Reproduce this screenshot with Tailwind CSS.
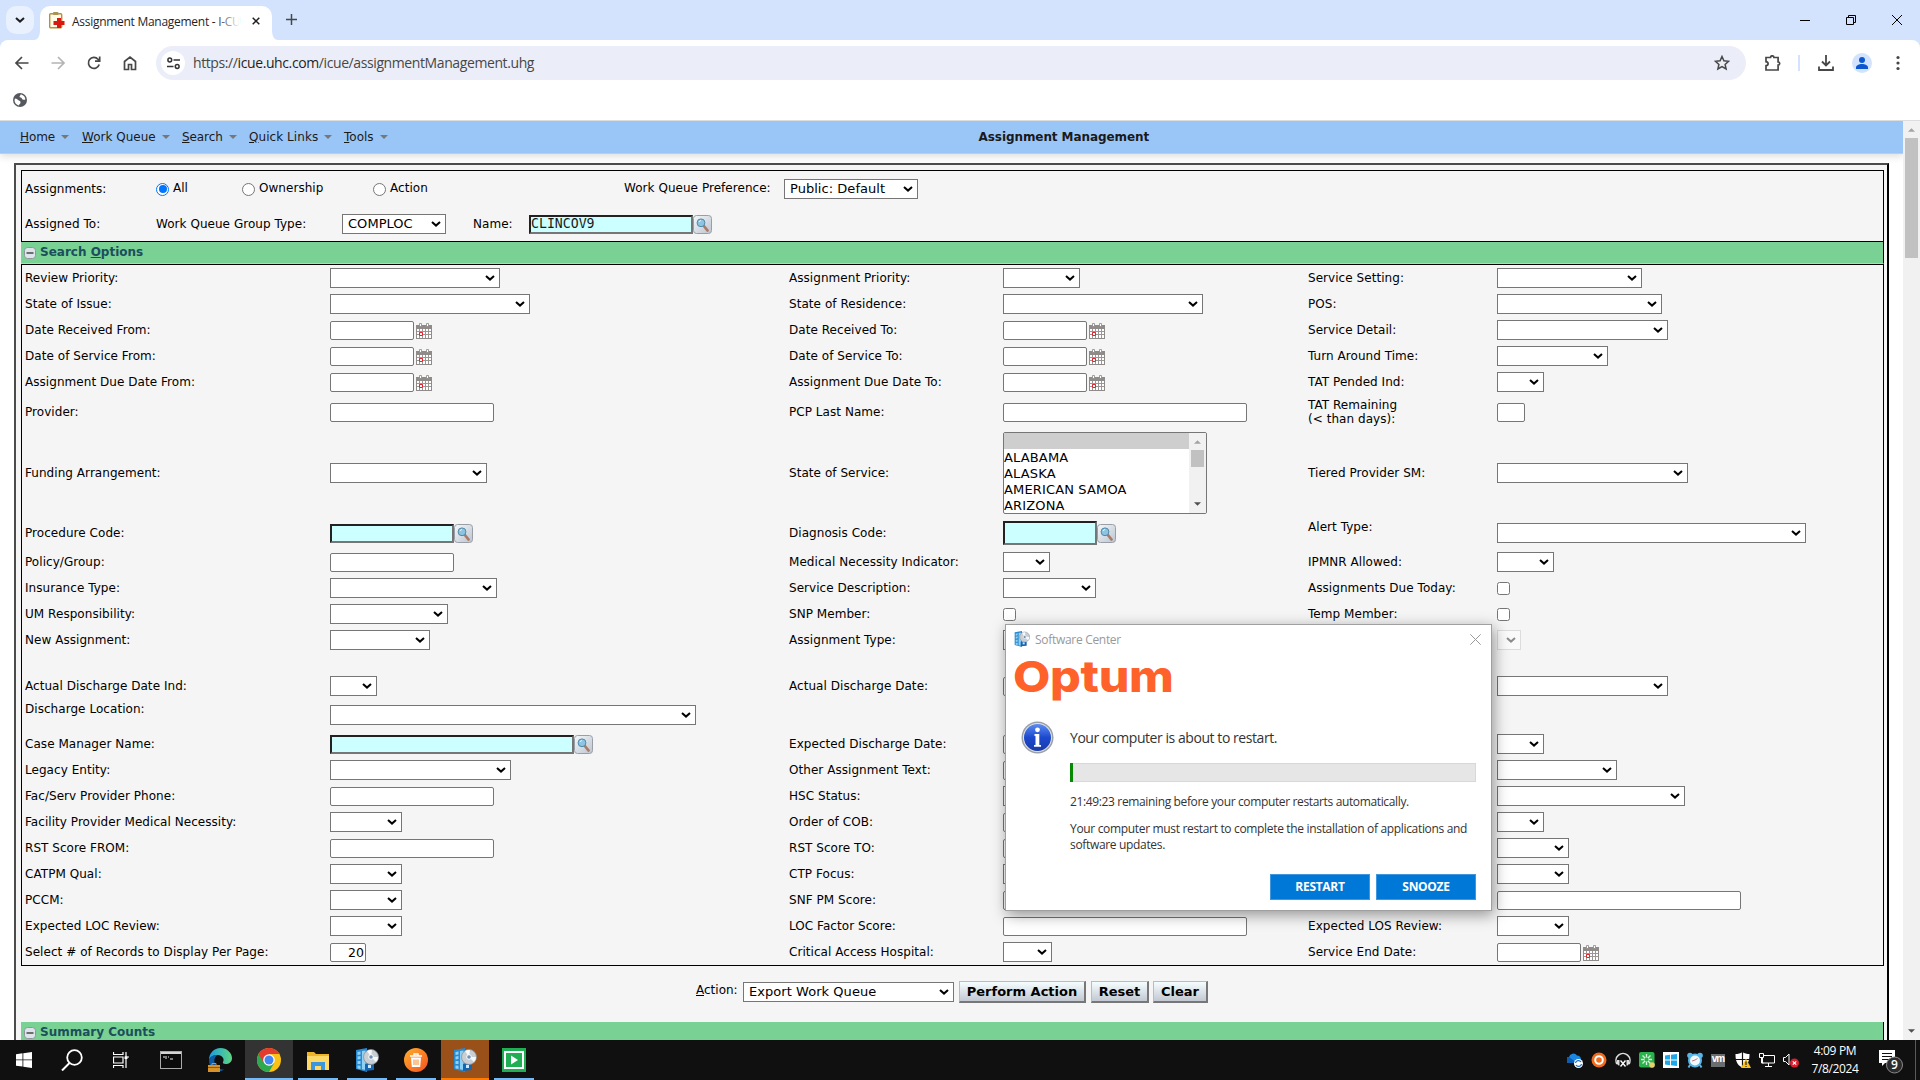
<!DOCTYPE html>
<html lang="en">
<head>
<meta charset="utf-8">
<title>Assignment Management - I-CUE</title>
<script src="https://cdn.jsdelivr.net/npm/@tailwindcss/browser@4"></script>
</head>
<body class="relative h-[1080px] w-[1920px] overflow-hidden bg-white font-['DejaVu_Sans',sans-serif] text-xs leading-[14px] text-black">

<svg class="absolute size-0" aria-hidden="true">
  <defs>
    <linearGradient id="gBtn" x1="0" y1="0" x2="1" y2="1"><stop offset="0" stop-color="#f4f8fa"/><stop offset="1" stop-color="#bcc4d0"/></linearGradient>
    <linearGradient id="gInfo" x1="0" y1="0" x2="0" y2="1"><stop offset="0" stop-color="#5d8df0"/><stop offset=".5" stop-color="#1d49cf"/><stop offset="1" stop-color="#1a3aa8"/></linearGradient>
    <linearGradient id="gEdge" x1="0" y1="0" x2="1" y2="0"><stop offset="0" stop-color="#1b9de2"/><stop offset="1" stop-color="#5fd67f"/></linearGradient>
    <linearGradient id="gTrash" x1="0" y1="0" x2="1" y2="1"><stop offset="0" stop-color="#ffb02e"/><stop offset="1" stop-color="#f4511e"/></linearGradient>
  </defs>
  <symbol id="chev" viewBox="0 0 10 6"><path d="M1 1l4 3.6L9 1" fill="none" stroke="currentColor" stroke-width="2"/></symbol>
  <symbol id="find" viewBox="0 0 19 19"><rect x=".5" y=".5" width="18" height="18" rx="3" fill="url(#gBtn)" stroke="#9a9ea6"/><path d="M10.500 10.500l4 5" stroke="#a87c66" stroke-width="2.800" stroke-linecap="round"/><circle cx="8" cy="7.800" r="3.900" fill="#8cc4e2" stroke="#4f88a8"/><path d="M6 7a2.500 2.500 0 0 1 2-1.500" stroke="#e8f7ff" fill="none"/></symbol>
  <symbol id="cal" viewBox="0 0 16 16"><rect x="0" y="2" width="16" height="14" fill="#8f8b89"/><path d="M1 6h14v9H1z" fill="#fff"/><path d="M3.500 6v9M6.500 6v9M9.500 6v9M12.500 6v9M1 8.500h14M1 11.500h14" stroke="#9b9795"/><path d="M3.500 9.500h3v3h-3z" fill="#fff" stroke="#e8232c"/><path d="M3.500 .5h2v3h-2zM10.500 .5h2v3h-2z" fill="#fff" stroke="#8a8684" stroke-width=".8"/></symbol>
  <symbol id="disc" viewBox="0 0 24 24"><path d="M1 2l11-2v24L1 21z" fill="#2a8ad0"/><path d="M2.500 4l3-.5v3l-3 .5zM2.500 8.500l3-.5v3l-3 .5zM2.500 13h3v3h-3zM2.500 17.500l3 .3V21l-3-.5zM7 3l3.500-.6V22L7 21.300z" fill="#8fd0f5"/><path d="M10 16h9v6l-9 1z" fill="#1565b0"/><path d="M13 17h3v3h-3z" fill="#cfe8fa"/><circle cx="16" cy="9" r="7.500" fill="#c9ced3" stroke="#8b9299" stroke-width=".8"/><path d="M16 9l-4-6a7 7 0 0 1 5-1zM16 9l5 5a7 7 0 0 0 2-5z" fill="#f7fafc"/><circle cx="16" cy="9" r="2.300" fill="#6c93b5" stroke="#fff"/></symbol>
  <symbol id="minus" viewBox="0 0 12 12"><rect x=".5" y=".5" width="11" height="11" rx="3" fill="#dde4ea" stroke="#8f979c"/><path d="M2.500 6h7" stroke="#222" stroke-width="1.200"/></symbol>
  <symbol id="tri" viewBox="0 0 8 4"><path d="M0 0h8L4 4z" fill="currentColor"/></symbol>
</svg>

<!-- Browser: tab strip -->
<header>
  <div class="flex h-10 items-end bg-[#d3e3fd] font-['Open_Sans',sans-serif]">
    <div class="mb-1.5 ml-1.5 flex size-7 items-center justify-center rounded-[10px] bg-[#e9f0fe]"><svg class="h-1.5 w-2.5 text-[#1f1f1f]"><use href="#chev"/></svg></div>
    <svg class="h-10 w-1.5"><path d="M6 30v10H0c4 0 6-4 6-10z" fill="#fff"/></svg>
    <div class="flex h-[34px] w-[232px] items-center rounded-t-[10px] bg-white pl-[9px]">
      <svg class="mt-[-5px] h-[17px] w-4" viewBox="0 0 16 17"><rect x=".7" y="1.700" width="12" height="14" rx="1" fill="#fffbe6" stroke="#b8903a" stroke-width="1.400"/><rect x="4" y="0" width="5.500" height="3" rx="1" fill="#a99255"/><path d="M8 6h4v3h3.500v4H12v3H8v-3H4.500V9H8z" fill="#d8190f"/></svg>
      <span class="relative mb-0.5 ml-[7px] w-[168px] whitespace-nowrap text-xs leading-5 tracking-[-0.28px] text-[#1f1f1f]">Assignment Management - I-CU<i class="absolute inset-y-0 right-0 w-6 bg-linear-to-r from-transparent to-white"></i></span>
      <svg class="mb-1 ml-3 size-2" viewBox="0 0 8 8"><path d="M.7.7l6.600 6.600M7.300.7L.7 7.300" stroke="#1f1f1f" stroke-width="1.500"/></svg>
    </div>
    <svg class="h-10 w-1.5"><path d="M0 30v10h6c-4 0-6-4-6-10z" fill="#fff"/></svg>
    <svg class="mb-[15px] ml-2 size-[11px]" viewBox="0 0 11 11"><path d="M5.500 0v11M0 5.500h11" stroke="#474747" stroke-width="1.500"/></svg>
    <div class="ml-auto flex self-center">
      <span class="flex w-[46px] justify-center"><svg class="size-2.5" viewBox="0 0 10 10"><path d="M0 5.500h10" stroke="#000"/></svg></span>
      <span class="flex w-[46px] justify-center"><svg class="size-2.5" viewBox="0 0 10 10"><path d="M.5 2.500h7v7h-7zM2.500 2.500v-2h7v7h-2" fill="none" stroke="#000"/></svg></span>
      <span class="flex w-[46px] justify-center"><svg class="size-2.5" viewBox="0 0 10 10"><path d="M0 0l10 10M10 0L0 10" stroke="#000"/></svg></span>
    </div>
  </div>
  <!-- Toolbar -->
  <div class="bg-[#d3e3fd]">
  <div class="flex h-[46px] items-center rounded-t-lg bg-white pl-1">
    <span class="flex w-9 justify-center"><svg class="size-4" viewBox="0 0 16 16"><path d="M14.500 8H2M8 2L2 8l6 6" fill="none" stroke="#474747" stroke-width="1.700"/></svg></span>
    <span class="flex w-9 justify-center"><svg class="size-4" viewBox="0 0 16 16"><path d="M1.500 8H14M8 2l6 6-6 6" fill="none" stroke="#b4b4b4" stroke-width="1.700"/></svg></span>
    <span class="flex w-9 justify-center"><svg class="size-4" viewBox="0 0 16 16"><path d="M13.200 9.500A5.500 5.500 0 1 1 12 4.200l1.500 1.600M13.700 1.500v4.600H9" fill="none" stroke="#474747" stroke-width="1.700"/></svg></span>
    <span class="flex w-9 justify-center"><svg class="size-4" viewBox="0 0 16 16"><path d="M2.500 6.500L8 2l5.500 4.500v8h-4v-5h-3v5h-4z" fill="none" stroke="#474747" stroke-width="1.700"/></svg></span>
    <div class="ml-2 flex h-[34px] w-[1590px] items-center rounded-full bg-[#ebeef8] pl-[5px]">
      <span class="flex size-6 items-center justify-center rounded-full bg-white"><svg class="size-[13px]" viewBox="0 0 13 13"><path d="M6.500 3H13M0 9.500h6.500" stroke="#333" stroke-width="1.600"/><circle cx="2.800" cy="3" r="1.900" fill="none" stroke="#333" stroke-width="1.500"/><circle cx="10.200" cy="9.500" r="1.900" fill="none" stroke="#333" stroke-width="1.500"/></svg></span>
      <span class="ml-2 font-['Open_Sans',sans-serif] text-sm tracking-[-0.4px] text-[#474747]">https://<span class="text-[#1f1f1f]">icue.uhc.com</span>/icue/assignmentManagement.uhg</span>
      <svg class="mr-4 ml-auto size-4" viewBox="0 0 16 16"><path d="M8 1.500l1.900 4.300 4.700.5-3.500 3.100 1 4.600L8 11.600 3.900 14l1-4.600L1.400 6.300l4.700-.5z" fill="none" stroke="#474747" stroke-width="1.500"/></svg>
    </div>
    <svg class="ml-[19px] size-4" viewBox="0 0 16 16"><path d="M1 2.500h4.500a1.700 1.700 0 0 1 3.400 0h4.200V7a1.600 1.600 0 0 1 0 3.200v4.800H1v-4.300c2.800-.4 2.800-3.600 0-4z" fill="none" stroke="#474747" stroke-width="1.700"/></svg>
    <i class="ml-[17px] h-4 w-0.5 bg-[#d3e3fd]"></i>
    <svg class="ml-[18px] size-4" viewBox="0 0 16 16"><path d="M8 0v10.500M4 6.500l4 4 4-4M1 11.500V15h14v-3.500" fill="none" stroke="#474747" stroke-width="1.800"/></svg>
    <svg class="ml-[18px] size-5" viewBox="0 0 20 20"><circle cx="10" cy="10" r="10" fill="#d3e3fd"/><circle cx="10" cy="7" r="3" fill="#0b57d0"/><path d="M4 16v-1.500c0-2 3-3.500 6-3.500s6 1.500 6 3.500V16z" fill="#0b57d0"/></svg>
    <svg class="ml-6 h-4 w-1" viewBox="0 0 4 16"><circle cx="2" cy="2.500" r="1.600" fill="#474747"/><circle cx="2" cy="8" r="1.600" fill="#474747"/><circle cx="2" cy="13.500" r="1.600" fill="#474747"/></svg>
  </div>
  </div>
  <div class="flex h-[35px] items-center border-b border-[#dadce0] bg-white pl-[13px]">
    <svg class="mb-1.5 size-3.5" viewBox="0 0 14 14"><circle cx="7" cy="7" r="7" fill="#55595e"/><path d="M2 5.500c1.500 0 2.500 1 3.500 1.800S7.500 8 7.500 9.500 6 11 6 12.500C3.500 12 1.500 10 1.500 7zM7.500 1.500c0 1-1 1.500-1 2.300S9 4.500 9 5.800s2 .7 3.300.9C12.500 4 10 1.500 7.500 1.500z" fill="#fff"/></svg>
  </div>
</header>

<div class="flex h-[919px]">
<main class="h-[919px] w-[1903px] overflow-hidden">
  <!-- Application menu -->
  <nav class="relative flex h-[33px] items-center border-b border-[#c9ccd1] bg-[#9ac6f7] pl-5 text-[#1a1a1a] shadow-[0_2px_8px_rgba(0,0,0,0.15)]">
    <span class="flex w-[62px] items-center"><span class="tracking-[-0.1px]"><u>H</u>ome</span><svg class="ml-1.5 h-1 w-2 text-[#777]"><use href="#tri"/></svg></span>
    <span class="flex w-[100px] items-center"><span><u>W</u>ork Queue</span><svg class="ml-1.5 h-1 w-2 text-[#777]"><use href="#tri"/></svg></span>
    <span class="flex w-[67px] items-center"><span class="tracking-[-0.1px]"><u>S</u>earch</span><svg class="ml-1.5 h-1 w-2 text-[#777]"><use href="#tri"/></svg></span>
    <span class="flex w-[95px] items-center"><span class="tracking-[0.06px]"><u>Q</u>uick Links</span><svg class="ml-1.5 h-1 w-2 text-[#777]"><use href="#tri"/></svg></span>
    <span class="flex items-center"><span><u>T</u>ools</span><svg class="ml-1.5 h-1 w-2 text-[#777]"><use href="#tri"/></svg></span>
    <b class="ml-[591px] tracking-[-0.08px]">Assignment Management</b>
  </nav>

  <div class="mt-[9px] ml-3.5 w-[1875px] border-2 border-r-black border-b-black border-t-[#4c4c4c] border-l-[#4c4c4c] bg-[#f5f5f5] px-[5px] pt-[5px] pb-10">
    <!-- Assignment header -->
    <section class="w-[1863px] border border-black tracking-[0.04px]">
      <div class="flex h-9 items-center pl-[3px]">
        <span class="w-[131px]">Assignments:</span>
        <span class="flex w-[86px] items-center"><i class="flex size-[13px] items-center justify-center rounded-full border border-[#0075ff] bg-white"><i class="size-2 rounded-full bg-[#0075ff]"></i></i><span class="mb-0.5 ml-1">All</span></span>
        <span class="flex w-[131px] items-center"><i class="size-[13px] rounded-full border border-[#767676] bg-white"></i><span class="mb-0.5 ml-1">Ownership</span></span>
        <span class="flex w-[251px] items-center"><i class="size-[13px] rounded-full border border-[#767676] bg-white"></i><span class="mb-0.5 ml-1">Action</span></span>
        <span class="mb-0.5 w-[160px]">Work Queue Preference:</span>
        <span class="flex h-5 w-[134px] items-center justify-between border border-[#767676] bg-white pr-1 pl-[5px] text-[13px]">Public: Default<svg class="h-1.5 w-2.5"><use href="#chev"/></svg></span>
      </div>
      <div class="flex h-[34px] items-center pl-[3px]">
        <span class="w-[131px]">Assigned To:</span>
        <span class="w-[186px]">Work Queue Group Type:</span>
        <span class="flex h-5 w-[104px] items-center justify-between border border-[#767676] bg-white pr-1 pl-[5px] text-[13px]">COMPLOC<svg class="h-1.5 w-2.5"><use href="#chev"/></svg></span>
        <span class="ml-[27px] w-14">Name:</span>
        <span class="flex h-[19px] w-[164px] items-center border-2 border-t-[#222] border-r-[#767676] border-b-[#767676] border-l-[#222] bg-[#ccffff] font-['DejaVu_Sans_Mono',monospace] text-[13.2px] leading-3 tracking-normal text-[#1a1a1a]">CLINCOV9</span>
        <svg class="size-[19px]"><use href="#find"/></svg>
      </div>
    </section>
    <div class="flex h-[22px] w-[1863px] items-center border-r border-b border-r-black border-b-[#a6e2b6] bg-[#79d293] pl-[3px]"><svg class="size-3"><use href="#minus"/></svg><b class="mb-0.5 ml-1 text-[#1b4f5c]">Search <u>O</u>ptions</b></div>
    <section id="options" class="h-[702px] w-[1863px] border border-black pl-[3px] tracking-[0.05px]"></section>
    <!-- Actions -->
    <div class="flex h-[56px] items-center pb-1 pl-[675px]">
      <span class="mb-1 w-[47px]"><u>A</u>ction:</span>
      <span class="flex h-5 w-[211px] items-center justify-between border border-[#767676] bg-white pr-1 pl-[5px] text-[13px] tracking-[0.05px]">Export Work Queue<svg class="h-1.5 w-2.5"><use href="#chev"/></svg></span>
      <button class="ml-[5px] h-[22px] w-[127px] border-t border-r-2 border-b-2 border-l border-t-[#bbb] border-r-[#777] border-b-[#777] border-l-[#bbb] bg-linear-to-b from-[#f5feff] to-[#c3c8d2] text-[13px] leading-none font-bold whitespace-nowrap">Perform Action</button>
      <button class="ml-[5px] h-[22px] w-[58px] border-t border-r-2 border-b-2 border-l border-t-[#bbb] border-r-[#777] border-b-[#777] border-l-[#bbb] bg-linear-to-b from-[#f5feff] to-[#c3c8d2] text-[13px] leading-none font-bold">Reset</button>
      <button class="ml-1 h-[22px] w-[55px] border-t border-r-2 border-b-2 border-l border-t-[#bbb] border-r-[#777] border-b-[#777] border-l-[#bbb] bg-linear-to-b from-[#f5feff] to-[#c3c8d2] text-[13px] leading-none font-bold">Clear</button>
    </div>
    <div class="flex h-[22px] w-[1863px] items-center border-r border-black bg-[#79d293] pl-[3px]"><svg class="size-3"><use href="#minus"/></svg><b class="mb-[3px] ml-1 text-[#1b4f5c]">Summary Counts</b></div>
  </div>
</main>
<!-- Page scrollbar -->
<aside class="flex w-[17px] flex-col items-center bg-[#f1f1f1]">
  <svg class="mt-[7px] h-1 w-[7px] rotate-180 text-[#a3a3a3]"><use href="#tri"/></svg>
  <i class="mt-1.5 h-[120px] w-[13px] bg-[#c1c1c1]"></i>
  <svg class="mt-auto mb-[7px] h-1 w-[7px] text-[#505050]"><use href="#tri"/></svg>
</aside>
</div>

<!-- Taskbar -->
<footer class="flex h-10 items-center bg-[#101010]">
  <span class="flex w-12 justify-center"><svg class="size-4" viewBox="0 0 16 16"><path d="M0 2.200l6.500-.9v6.200H0zM7.300 1.200L16 0v7.500H7.300zM0 8.300h6.500v6.300L0 13.700zM7.300 8.300H16V16l-8.700-1.200z" fill="#fff"/></svg></span>
  <span class="flex w-12 justify-center"><svg class="size-[22px]" viewBox="0 0 22 22"><circle cx="13.500" cy="8.500" r="7.300" fill="none" stroke="#fff" stroke-width="1.800"/><path d="M8.500 14L1 21.500" stroke="#fff" stroke-width="2"/></svg></span>
  <span class="flex w-[50px] justify-center"><svg class="size-4" viewBox="0 0 16 16"><path d="M.5 0v2.500h9.500V0M.5 16v-2.500h9.500V16M.5 5h9.500v6H.5zM13 0v16M12 5h4" fill="none" stroke="#fff" stroke-width="1.200"/><path d="M11.500 4.500h3V7h-3z" fill="#fff"/></svg></span>
  <span class="flex w-[49px] justify-center"><svg class="h-[18px] w-[22px]" viewBox="0 0 22 18"><rect x=".5" y=".5" width="21" height="17" fill="#0b0b0b" stroke="#a9a9a9"/><path d="M1 1h20v2H1z" fill="#d5d5d5"/><path d="M3 6h2M6 5v3M8 6h1M10 8h3" stroke="#eee"/></svg></span>
  <span class="flex w-[50px] justify-center"><svg class="size-6" viewBox="0 0 24 24"><path d="M1 12C1 5 6 0 12.500 0S24 5 24 10c0 4-3 6-6.500 6-2 0-3-1-2.500-2 2-3-1-7-5-7s-8 2-9 5z" fill="url(#gEdge)"/><path d="M1 12c1-4 5-5.500 8.500-5-3 2-4 5-2.500 9 1.500 3.500 5 5.500 9 5.500-3 3-15 3.500-15-9.500z" fill="#0c59a4"/><path d="M0 17h12v7H0z" fill="#d8922a"/><path d="M0 19.500h12" stroke="#8d5a12"/><path d="M4 17v-1.500h4V17" fill="none" stroke="#d8922a"/></svg></span>
  <span class="flex h-10 w-[48px] items-center justify-center border-y-2 border-t-[#333] border-b-[#76b9f7] bg-[#333]"><svg class="size-6" viewBox="0 0 24 24"><circle cx="12" cy="12" r="12" fill="#fbc116"/><path d="M12 12L1.600 6A12 12 0 0 1 22.400 6H12z" fill="#e33b2e"/><path d="M1.600 6A12 12 0 0 0 12 24l5.200-9L12 12z" fill="#2da94f"/><path d="M1.600 6l5.200 9L12 6z" fill="#e33b2e"/><circle cx="12" cy="12" r="5.800" fill="#fff"/><circle cx="12" cy="12" r="4.500" fill="#4285f4"/></svg></span>
  <span class="mr-[9px] ml-[5px] flex h-10 w-10 items-center justify-center border-y-2 border-t-transparent border-b-[#76b9f7]"><svg class="h-[19px] w-[22px]" viewBox="0 0 22 19"><path d="M0 1h7l2 2h13v16H0z" fill="#f0b429"/><path d="M0 5h22v14H0z" fill="#ffd868"/><path d="M4 11h14v8h-4v-4H8v4H4z" fill="#3a97dd"/></svg></span>
  <span class="mr-[9px] flex h-10 w-10 items-center justify-center border-y-2 border-t-transparent border-b-[#76b9f7]"><svg class="size-6"><use href="#disc"/></svg></span>
  <span class="mr-[5px] flex h-10 w-10 items-center justify-center border-y-2 border-t-transparent border-b-[#76b9f7]"><svg class="size-6" viewBox="0 0 24 24"><circle cx="12" cy="12" r="12" fill="url(#gTrash)"/><path d="M6 8h12M10 7.500V6h4v1.500" fill="none" stroke="#fff" stroke-width="1.400"/><path d="M7 9.500h10l-.8 9.500H7.800z" fill="#fff"/><path d="M10 11.500v5.500M12 11.500v5.500M14 11.500v5.500" stroke="#f58a2a"/></svg></span>
  <span class="mr-[5px] flex h-10 w-12 items-center justify-center border-y-2 border-t-[#9a5119] border-b-[#ff7a00] bg-[#9a5119]"><svg class="size-6"><use href="#disc"/></svg></span>
  <span class="flex h-10 w-10 items-center justify-center border-y-2 border-t-transparent border-b-[#76b9f7]"><svg class="size-6" viewBox="0 0 24 24"><path d="M0 0h24v24H0z" fill="#1fae54"/><path d="M3 4h18v16H3z" fill="none" stroke="#fff" stroke-width="2"/><path d="M9 7.500l7 4.500-7 4.500z" fill="#fff"/></svg></span>
  <!-- Tray -->
  <div class="ml-auto flex items-center gap-2">
    <svg class="size-4" viewBox="0 0 16 16"><path d="M1 11a3 3 0 0 1 1-6 4.500 4.500 0 0 1 8-1.500A4 4 0 0 1 14 8v3z" fill="#1c87e0"/><path d="M1 11a3 3 0 0 1 1-6l8 6z" fill="#0a5db5"/><circle cx="11.500" cy="11.500" r="4.500" fill="#fff"/><path d="M8.500 11a3 3 0 0 1 5.500-1M14.500 12a3 3 0 0 1-5.500 1" fill="none" stroke="#1c6fc4" stroke-width="1.300"/></svg>
    <svg class="size-4" viewBox="0 0 16 16"><circle cx="8" cy="8" r="7.500" fill="#f26a1b"/><circle cx="8" cy="8" r="3.800" fill="#f26a1b" stroke="#fff" stroke-width="2"/></svg>
    <svg class="size-4" viewBox="0 0 16 16"><path d="M2 12A7 7 0 1 1 14 12" fill="none" stroke="#ddd" stroke-width="1.500"/><path d="M2 8h2.500v5.500h-1L2 12zM14 8h-2.500v5.500h1L14 12z" fill="#ddd"/><path d="M5.500 8.500l5 6M10.500 8.500l-5 6" stroke="#fff" stroke-width="1.400"/></svg>
    <svg class="size-4" viewBox="0 0 16 16"><rect width="15.500" height="15.500" rx="2" fill="#2bb24c"/><path d="M7.500 2v11M2 7.500h11M3.500 3.500l8 8M11.500 3.500l-8 8" stroke="#d5f6da" stroke-width="1.300"/><circle cx="7.500" cy="7.500" r="2" fill="#2bb24c"/><circle cx="13" cy="13" r="2.800" fill="#e8cf6a"/></svg>
    <svg class="size-4" viewBox="0 0 16 16"><path d="M0 0h16v16H0z" fill="#fff"/><path d="M2 3.500l5-.7v4.700H2zM8 2.700l6-.8v5.600H8zM2 8.500h5v4.700l-5-.7zM8 8.500h6v5.600l-6-.8z" fill="#1ea7e8"/></svg>
    <svg class="size-4" viewBox="0 0 16 16"><circle cx="3" cy="3.500" r="2.800" fill="#58b5e8"/><circle cx="13" cy="3.500" r="2.800" fill="#58b5e8"/><path d="M3 13l-1.500 2.500M13 13l1.500 2.500" stroke="#58b5e8" stroke-width="2"/><circle cx="8" cy="8.500" r="6" fill="#eef8fd" stroke="#58b5e8" stroke-width="2"/><path d="M5 9l3-1 2.500-1.500" stroke="#c77" fill="none"/></svg>
    <span class="flex h-[13px] w-[14px] items-center justify-center bg-[#6a6d70] pb-0.5 font-['Liberation_Sans',sans-serif] text-[10px] leading-none font-bold tracking-[-1px] text-white">vm</span>
    <svg class="ml-0.5 size-4" viewBox="0 0 16 16"><path d="M7.500 0C5.500 1.500 3 2 .5 2c0 6 1 11 7 13.500C13.500 13 14.500 8 14.500 2 12 2 9.500 1.500 7.500 0z" fill="#fff"/><path d="M7.500 0v15M.5 7.500h14" stroke="#101010" stroke-width="1.200"/><path d="M11 6.500l5 9.500H6z" fill="#fdc116"/><path d="M11 9.500v3.500M11 14v1" stroke="#333" stroke-width="1.300"/></svg>
    <svg class="size-4" viewBox="0 0 16 16"><path d="M5 3.500h10.500v7.500H3.500V6M9.500 11v3.500M6 14.500h7M.5 1.500h4v4h-4zM2.500 5.500V11h2" fill="none" stroke="#fff"/></svg>
    <svg class="size-4" viewBox="0 0 16 16"><path d="M.5 5.500h2L6 2v11L2.500 9.500h-2z" fill="none" stroke="#fff"/><circle cx="11.500" cy="11" r="4.500" fill="#d9202e"/><path d="M9.800 9.300l3.400 3.400M13.200 9.300l-3.400 3.400" stroke="#fff" stroke-width="1.200"/></svg>
  </div>
  <div class="ml-3 flex w-[48px] flex-col items-center font-['Open_Sans',sans-serif] text-xs leading-[18px] tracking-[-0.35px] text-white"><span class="whitespace-nowrap">4:09 PM</span><span class="whitespace-nowrap">7/8/2024</span></div>
  <div class="mt-1 mr-[11px] ml-5 h-6 w-[25px]"><svg class="h-6 w-[25px]" viewBox="0 0 25 24"><path d="M0 0h16v13H6l-3 3v-3H0z" fill="#fff"/><path d="M3 3.500h10M3 6.500h10M3 9.500h7" stroke="#101010"/><circle cx="15.500" cy="15" r="8" fill="#2b2b2b" stroke="#8a8a8a"/><text x="15.500" y="19.300" text-anchor="middle" font-family="Open Sans" font-size="12" font-weight="600" fill="#fff">9</text></svg></div>
  <i class="mr-1 h-10 w-px bg-[#5a5a5a]"></i>
</footer>

<!-- Restart notification window -->
<div class="absolute top-[624px] left-[1005px] h-[287px] w-[487px] border border-[#a0a0a0] bg-white font-['Open_Sans',sans-serif] text-[#333] shadow-[2px_4px_14px_rgba(0,0,0,0.4)]">
  <div class="flex h-7 items-center pl-2">
    <svg class="size-4"><use href="#disc"/></svg>
    <span class="mt-0.5 ml-[5px] text-xs tracking-[-0.3px] text-[#999]">Software Center</span>
    <svg class="mr-[10px] ml-auto size-[11px]" viewBox="0 0 11 11"><path d="M.3.3l10.400 10.400M10.700.3L.3 10.700" stroke="#999"/></svg>
  </div>
  <div class="h-[67px] pl-[7px] font-['Inter',sans-serif] text-[43px] leading-[46px] font-extrabold text-[#ff612b]"><span class="inline-block origin-left scale-x-[1.125] tracking-[-0.3px]">Optum</span></div>
  <div class="flex pl-[15px]">
    <svg class="mt-px size-[33px]" viewBox="0 0 33 33"><circle cx="16.500" cy="16.500" r="16" fill="#9aa0a8"/><circle cx="16.500" cy="16.500" r="14.500" fill="#dfe3e8"/><circle cx="16.500" cy="16.500" r="13.500" fill="url(#gInfo)"/><circle cx="16.500" cy="8.800" r="2.400" fill="#fff"/><path d="M13.500 13h4.800v11h1.700v1.800h-7V24h1.500v-9h-1z" fill="#fff"/></svg>
    <div class="ml-4 w-[406px]">
      <p class="pt-2 text-[14px] leading-5 tracking-[-0.44px]">Your computer is about to restart.</p>
      <div class="mt-[15px] h-[19px] border border-[#d8d8d8] bg-[#e6e6e6]"><i class="-mt-px -ml-px block h-[19px] w-[3px] bg-[#068a06]"></i></div>
      <p class="mt-3 text-xs leading-4 tracking-[-0.36px] whitespace-nowrap">21:49:23 remaining before your computer restarts automatically.</p>
      <p class="mt-[11px] text-xs leading-4 tracking-[-0.33px] whitespace-nowrap">Your computer must restart to complete the installation of applications and<br>software updates.</p>
      <div class="mt-[21px] flex justify-end gap-1.5 text-xs font-bold tracking-[-0.3px] text-white">
        <button class="h-[26px] w-[100px] border border-[#3f97e0] bg-[#0078d7]">RESTART</button>
        <button class="h-[26px] w-[100px] border border-[#3f97e0] bg-[#0078d7]">SNOOZE</button>
      </div>
    </div>
  </div>
</div>

<script>
// Search form: each row is [height, modifiers, left field, middle field, right field];
// a field is [label, control kind, control width].
const rows = [
  [26, '', ['Review Priority:', 'select', 170], ['Assignment Priority:', 'select', 77], ['Service Setting:', 'select', 145]],
  [26, '', ['State of Issue:', 'select', 200], ['State of Residence:', 'select', 200], ['POS:', 'select', 165]],
  [26, '', ['Date Received From:', 'date', 84], ['Date Received To:', 'date', 84], ['Service Detail:', 'select', 171]],
  [26, '', ['Date of Service From:', 'date', 84], ['Date of Service To:', 'date', 84], ['Turn Around Time:', 'select', 111]],
  [26, '', ['Assignment Due Date From:', 'date', 84], ['Assignment Due Date To:', 'date', 84], ['TAT Pended Ind:', 'select', 47]],
  [36, 'pb-0.5', ['Provider:', 'text', 164], ['PCP Last Name:', 'text', 244], ['TAT Remaining<br>(&lt; than days):', 'text', 28]],
  [84, '', ['Funding Arrangement:', 'select', 157], ['State of Service:', 'list', 204], ['Tiered Provider SM:', 'select', 191]],
  [34, 'pt-0.5', ['Procedure Code:', 'lookup', 124], ['Diagnosis Code:', 'tall', 94], ['Alert Type:', 'select', 309, 'up']],
  [26, '', ['Policy/Group:', 'text', 124], ['Medical Necessity Indicator:', 'select', 47], ['IPMNR Allowed:', 'select', 57]],
  [26, '', ['Insurance Type:', 'select', 167], ['Service Description:', 'select', 93], ['Assignments Due Today:', 'check', 13]],
  [26, '', ['UM Responsibility:', 'select', 118], ['SNP Member:', 'check', 13], ['Temp Member:', 'check', 13]],
  [26, '', ['New Assignment:', 'select', 100], ['Assignment Type:', 'select', 100], ['', 'disabled', 24]],
  [46, 'pt-5', ['Actual Discharge Date Ind:', 'select', 47], ['Actual Discharge Date:', 'text', 84], ['', 'select', 171]],
  [32, '', ['Discharge Location:', 'select', 366, 'up'], ['', 'none', 0], ['', 'none', 0]],
  [26, '', ['Case Manager Name:', 'lookup', 244], ['Expected Discharge Date:', 'text', 84], ['', 'select', 47]],
  [26, '', ['Legacy Entity:', 'select', 181], ['Other Assignment Text:', 'text', 164], ['', 'select', 120]],
  [26, '', ['Fac/Serv Provider Phone:', 'text', 164], ['HSC Status:', 'select', 120], ['', 'select', 188]],
  [26, '', ['Facility Provider Medical Necessity:', 'select', 72], ['Order of COB:', 'text', 84], ['', 'select', 47]],
  [26, '', ['RST Score FROM:', 'text', 164], ['RST Score TO:', 'text', 164], ['', 'select', 72]],
  [26, '', ['CATPM Qual:', 'select', 72], ['CTP Focus:', 'select', 72], ['', 'select', 72]],
  [26, '', ['PCCM:', 'select', 72], ['SNF PM Score:', 'text', 164], ['', 'text', 244]],
  [26, '', ['Expected LOC Review:', 'select', 72], ['LOC Factor Score:', 'text', 244], ['Expected LOS Review:', 'select', 72]],
  [26, '', ['Select # of Records to Display Per Page:', 'number', 36], ['Critical Access Hospital:', 'select', 49], ['Service End Date:', 'date', 84]],
];
const chev = '<svg class="h-1.5 w-2.5"><use href="#chev"/></svg>';
const find = '<svg class="size-[19px]"><use href="#find"/></svg>';
const input = (w, inner = '') => `<span class="mt-px flex h-[19px] items-center justify-end rounded-[2px] border border-[#767676] bg-white pr-px text-[12.5px]" style="width:${w}px">${inner}</span>`;
const controls = {
  none: () => '',
  select: w => `<span class="flex h-5 items-center justify-end border border-[#767676] bg-white pr-1" style="width:${w}px">${chev}</span>`,
  disabled: w => `<span class="flex h-5 items-center justify-end border border-[#dcdcdc] bg-[#fafafa] pr-1 text-[#8c8c8c]" style="width:${w}px">${chev}</span>`,
  text: w => input(w),
  number: w => input(w, '20'),
  date: w => input(w) + '<svg class="mt-0.5 ml-0.5 size-4"><use href="#cal"/></svg>',
  check: () => '<span class="mt-px size-[13px] rounded-[2.5px] border border-[#767676] bg-white"></span>',
  lookup: w => `<span class="mt-px h-[19px] border-2 border-t-[#222] border-r-[#767676] border-b-[#767676] border-l-[#222] bg-[#ccffff]" style="width:${w}px"></span><span class="mt-px">${find}</span>`,
  tall: w => `<span class="h-6 border-2 border-t-[#222] border-r-[#767676] border-b-[#767676] border-l-[#222] bg-[#ccffff]" style="width:${w}px"></span><span class="mt-px">${find}</span>`,
  list: w => `<span class="flex h-[82px] overflow-hidden rounded-[2px] border border-[#767676] bg-white text-[13px] leading-4 tracking-[0.15px]" style="width:${w}px">
      <span class="flex grow flex-col"><span class="mb-px h-4 bg-[#cecece]"></span><span>ALABAMA</span><span>ALASKA</span><span class="whitespace-nowrap">AMERICAN SAMOA</span><span class="h-[15px]">ARIZONA</span></span>
      <span class="flex w-[17px] flex-col items-center bg-[#f1f1f1]"><svg class="mt-[7px] h-1 w-[7px] rotate-180 text-[#a3a3a3]"><use href="#tri"/></svg><i class="mt-1.5 h-[17px] w-[13px] bg-[#c1c1c1]"></i><svg class="mt-auto mb-[7px] h-1 w-[7px] text-[#505050]"><use href="#tri"/></svg></span>
    </span>`,
};
const field = ([label, kind, w, up]) =>
  `<span class="${up ? 'pb-3' : ''}">${label}</span><span class="flex items-center">${controls[kind](w)}</span>`;
document.getElementById('options').innerHTML = rows.map(([h, mod, ...fields]) =>
  `<div class="grid grid-cols-[305px_459px_214px_305px_189px_1fr] items-center ${mod}" style="height:${h}px">${fields.map(field).join('')}</div>`).join('');
</script>
</body>
</html>
